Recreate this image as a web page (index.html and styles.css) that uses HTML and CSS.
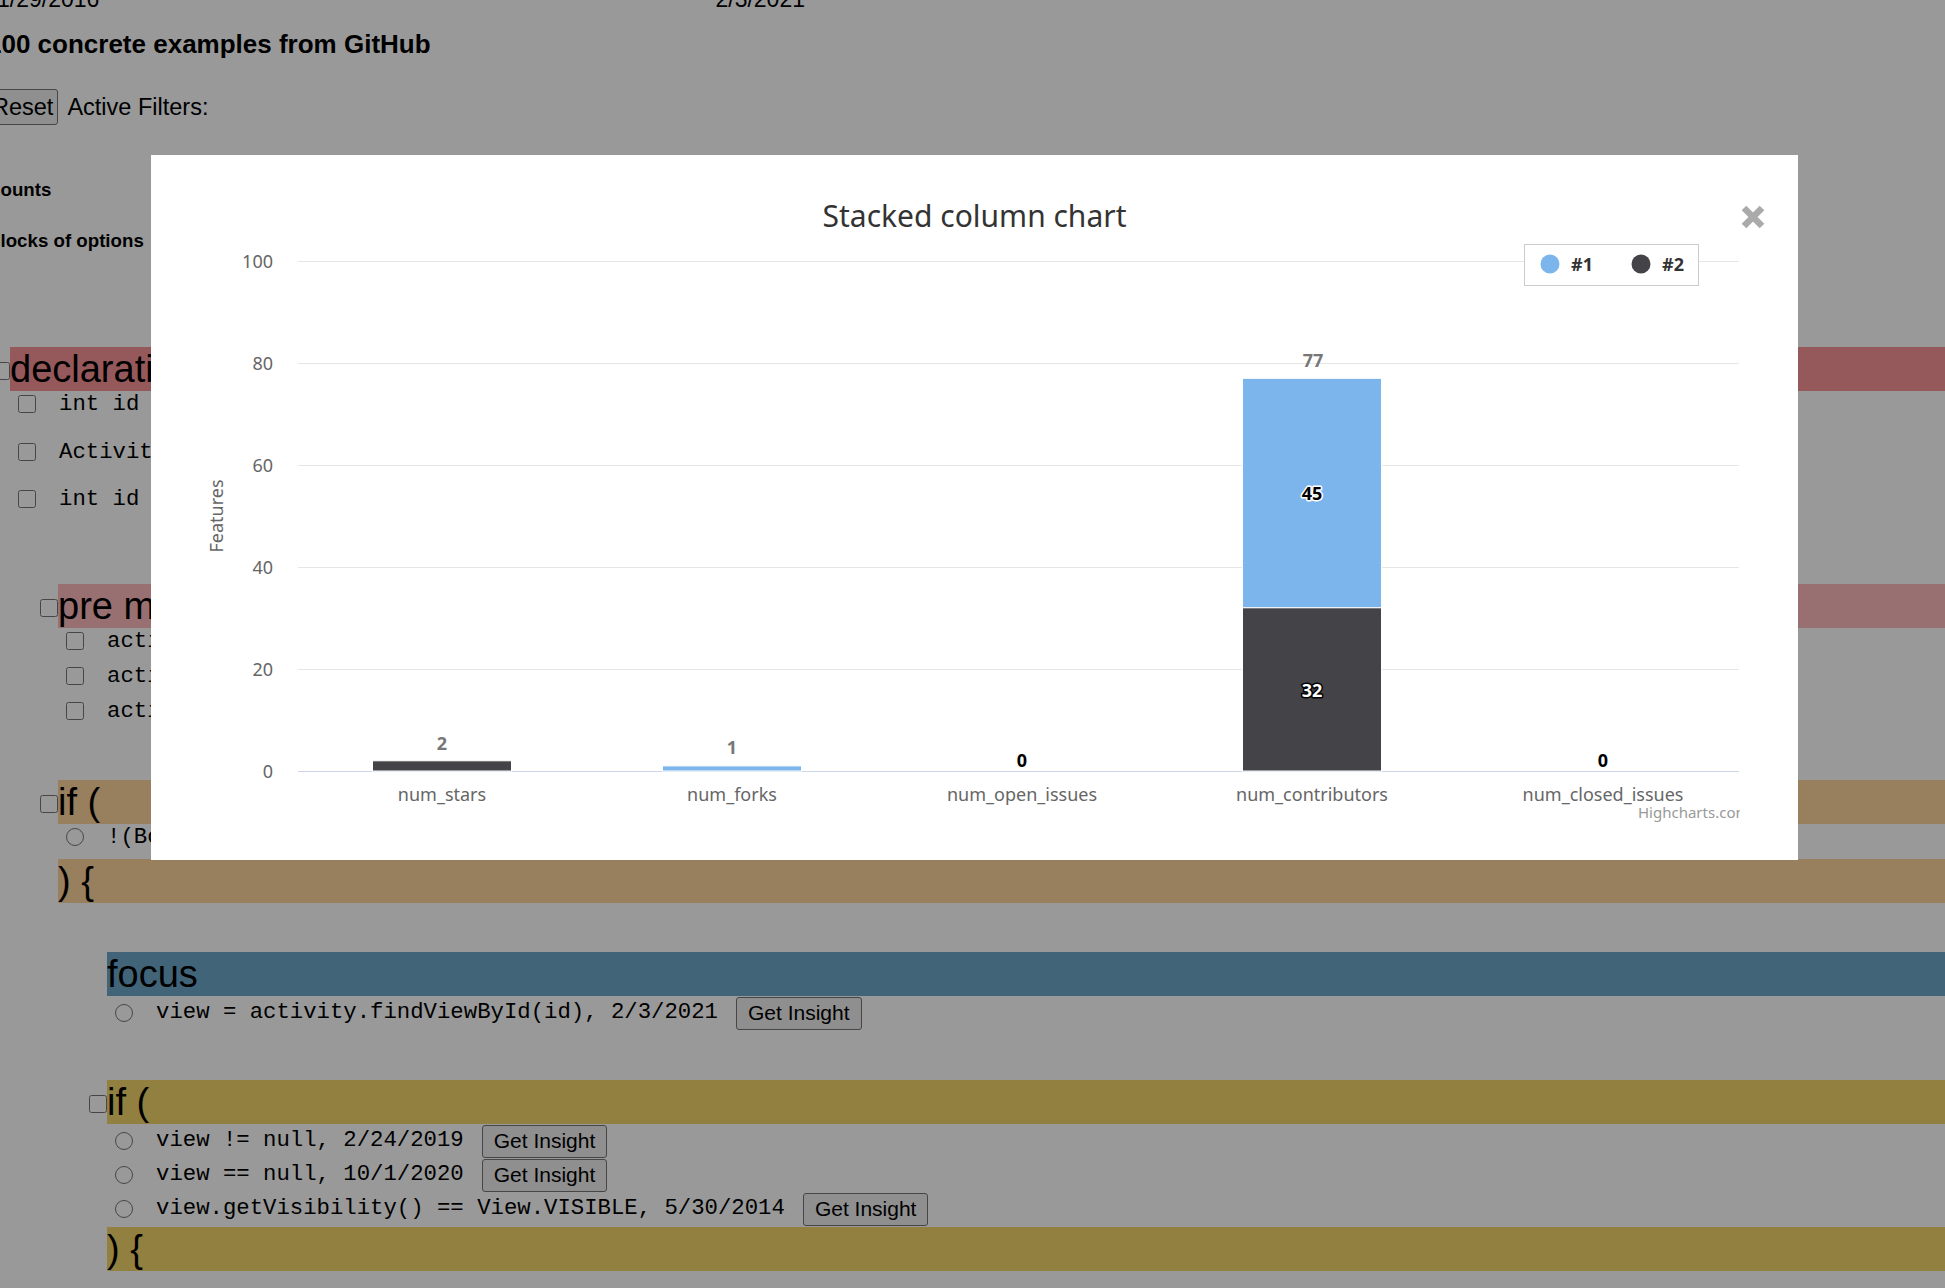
FILE: index.html
```html
<!DOCTYPE html>
<html lang="en">
<head>
<meta charset="utf-8">
<title>Concrete examples from GitHub</title>
<link rel="stylesheet" href="styles.css">
</head>
<body>
<div class="page">
  <div class="range-labels"><span>1/29/2016</span><span>2/3/2021</span></div>
  <h1 class="title">100 concrete examples from GitHub</h1>
  <div class="filters"><button class="btn btn-reset">Reset</button><span class="filters-label">Active Filters:</span></div>
  <h4 class="section-label">Counts</h4>
  <h4 class="section-label section-label--blocks">Blocks of options</h4>

  <section class="block block--decl">
    <div class="block-head"><input type="checkbox" class="head-check"><span class="band band--red">declarations</span></div>
    <div class="rows rows--loose">
      <label class="row"><input type="checkbox"><code>int id</code></label>
      <label class="row"><input type="checkbox"><code>Activity activity</code></label>
      <label class="row"><input type="checkbox"><code>int id</code></label>
    </div>
  </section>

  <section class="block block--l1 block--pre">
    <div class="block-head"><input type="checkbox" class="head-check"><span class="band band--pink">pre method</span></div>
    <div class="rows rows--tight">
      <label class="row"><input type="checkbox"><code>activity</code></label>
      <label class="row"><input type="checkbox"><code>activity</code></label>
      <label class="row"><input type="checkbox"><code>activity</code></label>
    </div>
  </section>

  <section class="block block--l1 block--if">
    <div class="block-head"><input type="checkbox" class="head-check"><span class="band band--tan">if (</span></div>
    <div class="rows">
      <label class="row"><input type="radio" name="c1"><code>!(Boolean)</code></label>
    </div>
    <div class="band band--tan band--close">) {</div>

    <div class="block-body">
      <section class="block block--focus">
        <div class="band band--blue band--close">focus</div>
        <div class="rows">
          <div class="row row--btn"><input type="radio" name="f1"><code>view = activity.findViewById(id), 2/3/2021</code><button class="btn btn-insight">Get Insight</button></div>
        </div>
      </section>

      <section class="block block--if2">
        <div class="block-head"><input type="checkbox" class="head-check"><span class="band band--olive">if (</span></div>
        <div class="rows">
          <div class="row row--btn"><input type="radio" name="c2"><code>view != null, 2/24/2019</code><button class="btn btn-insight">Get Insight</button></div>
          <div class="row row--btn"><input type="radio" name="c2"><code>view == null, 10/1/2020</code><button class="btn btn-insight">Get Insight</button></div>
          <div class="row row--btn"><input type="radio" name="c2"><code>view.getVisibility() == View.VISIBLE, 5/30/2014</code><button class="btn btn-insight">Get Insight</button></div>
        </div>
        <div class="band band--olive band--close">) {</div>
      </section>
    </div>
  </section>
</div>

<div class="backdrop"></div>

<div class="modal" role="dialog" aria-label="Stacked column chart">
  <svg class="chart" width="1647" height="705" viewBox="0 0 1647 705">
    <defs>
      <clipPath id="plotclip"><rect x="0" y="0" width="1589" height="705"/></clipPath>
    </defs>
    <text class="chart-title" x="823.5" y="72" text-anchor="middle">Stacked column chart</text>

    <g class="grid">
      <line x1="147" x2="1588" y1="106.5" y2="106.5"/>
      <line x1="147" x2="1588" y1="208.5" y2="208.5"/>
      <line x1="147" x2="1588" y1="310.5" y2="310.5"/>
      <line x1="147" x2="1588" y1="412.5" y2="412.5"/>
      <line x1="147" x2="1588" y1="514.5" y2="514.5"/>
    </g>
    <line class="axis-line" x1="147" x2="1588" y1="616.5" y2="616.5"/>

    <g class="y-labels" text-anchor="end">
      <text x="122" y="113">100</text>
      <text x="122" y="215">80</text>
      <text x="122" y="317">60</text>
      <text x="122" y="419">40</text>
      <text x="122" y="521">20</text>
      <text x="122" y="623">0</text>
    </g>
    <text class="axis-title" transform="translate(72 361) rotate(-90)" text-anchor="middle">Features</text>

    <g class="bars">
      <rect class="s2" x="221.5" y="605.8" width="139" height="10.2"/>
      <rect class="s1" x="511.5" y="610.9" width="139" height="5.1"/>
      <rect class="s1" x="1091.5" y="223.3" width="139" height="229.5"/>
      <rect class="s2" x="1091.5" y="452.8" width="139" height="163.2"/>
    </g>

    <g class="stack-labels" text-anchor="middle">
      <text x="291" y="595">2</text>
      <text x="581" y="599">1</text>
      <text x="1162" y="212">77</text>
    </g>
    <g class="data-labels" text-anchor="middle">
      <text class="dl-dark" x="871" y="612">0</text>
      <text class="dl-dark" x="1452" y="612">0</text>
      <text class="dl-dark" x="1161" y="345">45</text>
      <text class="dl-light" x="1161" y="542">32</text>
    </g>

    <g class="x-labels" text-anchor="middle">
      <text x="291" y="646">num_stars</text>
      <text x="581" y="646">num_forks</text>
      <text x="871" y="646">num_open_issues</text>
      <text x="1161" y="646">num_contributors</text>
      <text x="1452" y="646">num_closed_issues</text>
    </g>

    <text class="credit" x="1487" y="663" clip-path="url(#plotclip)">Highcharts.com</text>

    <g class="legend">
      <rect class="legend-box" x="1373.5" y="89.5" width="174" height="41"/>
      <circle cx="1399" cy="109" r="9.5" class="s1"/>
      <text class="legend-text" x="1420" y="115.5">#1</text>
      <circle cx="1490" cy="109" r="9.5" class="s2"/>
      <text class="legend-text" x="1511" y="115.5">#2</text>
    </g>
  </svg>
  <button class="modal-close" aria-label="Close">
    <svg width="24" height="24" viewBox="0 0 24 24"><path d="M3 3L21 21M21 3L3 21" stroke="#aaaaaa" stroke-width="6.5" fill="none"/></svg>
  </button>
</div>
</body>
</html>
```

FILE: styles.css
```css
html, body {
  margin: 0;
  padding: 0;
}
body {
  background: #ffffff;
  color: #000000;
  font-family: "Liberation Sans", Arial, sans-serif;
  overflow: hidden;
}

.page {
  margin-left: -13px;
  width: calc(100% + 13px);
}

.range-labels {
  display: flex;
  justify-content: space-between;
  width: 808px;
  padding-left: 10px;
  margin-top: -14px;
  font-size: 23px;
  line-height: 26px;
}

.title {
  margin: 17px 0 0;
  font-size: 26px;
  line-height: 30px;
  font-weight: bold;
}

.filters {
  margin-top: 30px;
  height: 36px;
  display: flex;
  align-items: center;
}
.btn {
  font-family: "Liberation Sans", Arial, sans-serif;
  color: #000;
  background: #efefef;
  border: 1px solid #767676;
  border-radius: 3px;
  box-sizing: border-box;
}
.btn-reset {
  height: 36px;
  font-size: 23.5px;
  line-height: 27px;
  padding: 0 4px;
}
.filters-label {
  margin-left: 9px;
  font-size: 23.5px;
}

.section-label {
  margin: 54px 0 0;
  font-size: 18.7px;
  line-height: 22px;
  font-weight: bold;
}
.section-label--blocks {
  margin-top: 29px;
}

/* blocks */
.block--decl { margin-top: 95px; }
.block--l1 { padding-left: 48px; }
.block--pre { margin-top: 72px; }
.block--if { margin-top: 56px; }
.block-body { padding-left: 49px; }
.block--focus { margin-top: 49px; }
.block--if2 { margin-top: 50px; }

.block-head {
  display: flex;
  align-items: flex-end;
}
.head-check {
  width: 18px;
  height: 18px;
  margin: 0 0 11px 5px;
  flex: none;
}
.band {
  flex: 1;
  font-size: 38px;
  line-height: 44px;
  height: 44px;
  white-space: nowrap;
  overflow: hidden;
}
.band--close {
  margin-left: 23px;
}
.block--if > .band--close { margin-top: 9px; }
.block--if2 > .band--close { margin-top: 1px; }

.band--red { background: #fa9498; }
.band--pink { background: #ffbbbc; }
.band--tan { background: #fdd49d; }
.band--blue { background: #6ea7ca; }
.band--olive { background: #f3d56b; }

.rows {
  display: flex;
  flex-direction: column;
}
.rows--loose { gap: 21.5px; }
.rows--tight { gap: 9px; }

.row {
  display: flex;
  align-items: center;
  height: 26px;
  padding-left: 31px;
  white-space: nowrap;
}
.row input {
  width: 18px;
  height: 18px;
  margin: 0 23px 0 0;
  flex: none;
}
.row code {
  font-family: "Liberation Mono", "Courier New", monospace;
  font-size: 22.3px;
  line-height: 26px;
}
.row--btn {
  height: 34px;
}
.row--btn code {
  margin-top: -3px;
}
.btn-insight {
  margin-left: 18px;
  height: 33px;
  padding: 0 11px;
  font-size: 21px;
  line-height: 24px;
}

/* modal */
.backdrop {
  position: fixed;
  inset: 0;
  background: rgba(0, 0, 0, 0.4);
}
.modal {
  position: fixed;
  left: 151px;
  top: 155px;
  width: 1647px;
  height: 705px;
  background: #ffffff;
}
.chart {
  display: block;
  font-family: "Noto Sans", "Open Sans", sans-serif;
}
.chart-title {
  font-size: 30px;
  fill: #333333;
}
.grid line {
  stroke: #e6e6e6;
  stroke-width: 1;
}
.axis-line {
  stroke: #ccd6eb;
  stroke-width: 1;
}
.y-labels text,
.x-labels text,
.axis-title {
  font-size: 18px;
  fill: #666666;
}
.s1 { fill: #7cb5ec; }
.s2 { fill: #434348; }
.bars rect {
  stroke: #ffffff;
  stroke-width: 1;
}
.stack-labels text {
  font-size: 18px;
  font-weight: bold;
  fill: #777777;
}
.data-labels text {
  font-size: 18px;
  font-weight: bold;
  paint-order: stroke;
  stroke-linejoin: round;
  stroke-width: 3px;
}
.dl-dark {
  fill: #000000;
  stroke: #ffffff;
}
.dl-light {
  fill: #ffffff;
  stroke: #000000;
}
.credit {
  font-size: 15px;
  fill: #999999;
}
.legend-box {
  fill: #ffffff;
  stroke: #cccccc;
  stroke-width: 1;
}
.legend-text {
  font-size: 18px;
  font-weight: bold;
  fill: #333333;
}
.modal-close {
  position: absolute;
  left: 1590px;
  top: 50px;
  width: 24px;
  height: 24px;
  padding: 0;
  border: 0;
  background: transparent;
  cursor: pointer;
}
.modal-close svg {
  display: block;
}
```
